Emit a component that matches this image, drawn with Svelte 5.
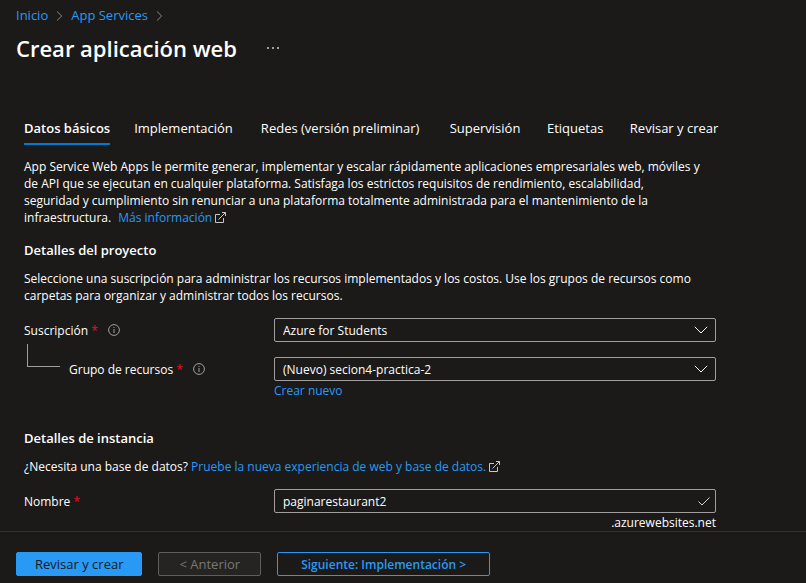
<script>
  const tabs = [
    'Datos básicos',
    'Implementación',
    'Redes (versión preliminar)',
    'Supervisión',
    'Etiquetas',
    'Revisar y crear'
  ];
  let active = $state(0);
  let subscription = $state('Azure for Students');
  let group = $state('(Nuevo) secion4-practica-2');
  let name = $state('paginarestaurant2');
</script>

{#snippet external()}
  <svg class="external" width="11" height="11" viewBox="0 0 11 11" aria-hidden="true">
    <path d="M5 2.500H0.500v8h8V6M3.500 7.500l7-7M7 0.500h3.500V4" />
  </svg>
{/snippet}

{#snippet info()}
  <svg class="info" width="12" height="12" viewBox="0 0 12 12" aria-hidden="true">
    <circle cx="6" cy="6" r="5.400" />
    <path d="M6 5v4M6 3v1" />
  </svg>
{/snippet}

{#snippet chevron()}
  <svg class="mark" width="14" height="8" viewBox="0 0 14 8" aria-hidden="true">
    <path d="M0.800 0.800L7 7l6.200-6.200" />
  </svg>
{/snippet}

{#snippet crumb()}
  <svg class="crumb" width="7" height="10" viewBox="0 0 7 10" aria-hidden="true">
    <path d="M1 0.500L5.700 5L1 9.500" />
  </svg>
{/snippet}

<div class="page">
  <header>
    <nav class="crumbs" aria-label="Ruta">
      <a href="#inicio">Inicio</a>
      {@render crumb()}
      <a href="#servicios">App Services</a>
      {@render crumb()}
    </nav>
    <div class="title">
      <h1>Crear aplicación web</h1>
      <button class="more" aria-label="Más opciones">
        <svg width="12" height="2" viewBox="0 0 12 2" aria-hidden="true">
          <path d="M0 0h2v2H0zM5 0h2v2H5zM10 0h2v2h-2z" />
        </svg>
      </button>
    </div>
  </header>

  <main>
    <div class="tabs" role="tablist">
      {#each tabs as tab, i}
        <button
          role="tab"
          class:active={active === i}
          aria-selected={active === i}
          data-label={tab}
          onclick={() => (active = i)}>{tab}</button>
      {/each}
    </div>

    <div class="form">
      <p class="intro">
        App Service Web Apps le permite generar, implementar y escalar rápidamente aplicaciones empresariales web, móviles y<br />
        de API que se ejecutan en cualquier plataforma. Satisfaga los estrictos requisitos de rendimiento, escalabilidad,<br />
        seguridad y cumplimiento sin renunciar a una plataforma totalmente administrada para el mantenimiento de la<br />
        infraestructura. <a class="learn" href="#info">Más información</a> {@render external()}
      </p>

      <h2>Detalles del proyecto</h2>
      <p>
        Seleccione una suscripción para administrar los recursos implementados y los costos. Use los grupos de recursos como
        carpetas para organizar y administrar todos los recursos.
      </p>

      <div class="row first">
        <div class="label">
          <label for="subscription">Suscripción <span class="req">*</span></label>
          {@render info()}
        </div>
        <div class="field">
          <select id="subscription" bind:value={subscription}>
            <option>Azure for Students</option>
          </select>
          {@render chevron()}
        </div>
      </div>

      <div class="row second">
        <div class="label nested">
          <span class="branch"></span>
          <label for="group">Grupo de recursos <span class="req">*</span></label>
          {@render info()}
        </div>
        <div class="field">
          <select id="group" bind:value={group}>
            <option>(Nuevo) secion4-practica-2</option>
          </select>
          {@render chevron()}
        </div>
      </div>
      <div class="under"><a href="#nuevo">Crear nuevo</a></div>

      <h2 class="instance">Detalles de instancia</h2>
      <p>
        ¿Necesita una base de datos?
        <a href="#experiencia">Pruebe la nueva experiencia de web y base de datos.</a>
        {@render external()}
      </p>

      <div class="row first">
        <div class="label">
          <label for="name">Nombre <span class="req">*</span></label>
        </div>
        <div class="field">
          <input id="name" type="text" bind:value={name} />
          <svg class="mark check" width="12" height="9" viewBox="0 0 12 9" aria-hidden="true">
            <path d="M0.500 4.500L4 8l7.500-7.500" />
          </svg>
        </div>
      </div>
      <div class="suffix">.azurewebsites.net</div>
    </div>
  </main>

  <footer>
    <button class="primary">Revisar y crear</button>
    <button class="previous" disabled>&lt; Anterior</button>
    <button class="next">Siguiente: Implementación &gt;</button>
  </footer>
</div>

<style>
  :global(body) {
    background: #1b1a19;
  }
  .page {
    display: flex;
    flex-direction: column;
    min-height: 100vh;
    box-sizing: border-box;
    background: #1b1a19;
    color: #fff;
    font-family: 'Segoe UI', 'Open Sans', sans-serif;
    font-size: 12px;
    line-height: 17px;
  }
  button,
  input,
  select {
    font: inherit;
    color: inherit;
    margin: 0;
  }
  a {
    color: #2899f5;
    text-decoration: none;
  }
  svg {
    fill: none;
    stroke: #c8c6c4;
    flex: none;
  }
  header {
    padding: 7px 16px 0;
  }
  .crumbs {
    display: flex;
    align-items: center;
    gap: 8px;
    font-size: 13px;
  }
  .crumb {
    stroke: #8a8886;
  }
  .title {
    display: flex;
    align-items: center;
    gap: 30px;
    margin-top: 8px;
  }
  h1 {
    margin: 0;
    font-size: 22px;
    line-height: 32px;
    font-weight: 600;
  }
  .more {
    display: flex;
    padding: 0;
    border: 0;
    background: none;
  }
  .more svg {
    fill: #a19f9d;
    stroke: none;
  }
  main {
    flex: 1;
    padding: 56px 24px 0;
  }
  .tabs {
    display: flex;
    gap: 24px;
    font-size: 13px;
  }
  .tabs button {
    padding: 0 0 6px;
    border: 0;
    border-bottom: 2px solid transparent;
    background: none;
    white-space: nowrap;
    text-align: left;
  }
  .tabs button::after {
    content: attr(data-label);
    display: block;
    height: 0;
    overflow: hidden;
    visibility: hidden;
    font-weight: 600;
  }
  .tabs .active {
    border-color: #0078d4;
    font-weight: 600;
  }
  .form {
    max-width: 692px;
  }
  p {
    margin: 0;
  }
  .intro {
    margin-top: 13px;
  }
  .learn {
    margin-left: 4px;
  }
  .external {
    vertical-align: -1px;
  }
  h2 {
    margin: 16px 0 11px;
    font-size: 13px;
    line-height: 17px;
    font-weight: 600;
  }
  .instance {
    margin-top: 31px;
  }
  .row {
    display: flex;
    align-items: center;
  }
  .first {
    margin-top: 14px;
  }
  .second {
    margin-top: 15px;
  }
  .label {
    display: flex;
    align-items: center;
    gap: 10px;
    width: 250px;
    flex: none;
  }
  .req {
    color: #e81123;
  }
  .info {
    stroke: #a19f9d;
  }
  .nested {
    position: relative;
    box-sizing: border-box;
    padding-left: 45px;
  }
  .branch {
    position: absolute;
    left: 3px;
    bottom: 11px;
    width: 32px;
    height: 22px;
    border-left: 1px solid #a19f9d;
    border-bottom: 1px solid #a19f9d;
  }
  .field {
    position: relative;
    flex: 1;
    display: flex;
  }
  .field select,
  .field input {
    appearance: none;
    box-sizing: border-box;
    width: 100%;
    height: 24px;
    padding: 0 28px 0 8px;
    border: 1px solid #a19f9d;
    border-radius: 2px;
    background: #1b1a19;
    outline: none;
  }
  .mark {
    position: absolute;
    right: 8px;
    top: 8px;
    pointer-events: none;
    stroke: #fff;
  }
  .check {
    right: 6px;
    stroke: #d2d0ce;
  }
  .under {
    margin: 1px 0 0 250px;
  }
  .suffix {
    margin-top: 1px;
    text-align: right;
  }
  footer {
    display: flex;
    gap: 16px;
    padding: 20px 16px 7px;
    border-top: 1px solid #323130;
  }
  footer button {
    height: 24px;
    padding: 0 20px;
    border: 1px solid #2899f5;
    border-radius: 2px;
    background: none;
    font-size: 13px;
    white-space: nowrap;
  }
  footer .primary {
    padding: 0 18px;
    background: #2899f5;
    color: #1b1a19;
  }
  footer .previous {
    border-color: #605e5c;
    background: #252423;
    color: #797775;
  }
  footer .next {
    padding: 0 23px;
    color: #2899f5;
    font-size: 12px;
    font-weight: 600;
  }
</style>
